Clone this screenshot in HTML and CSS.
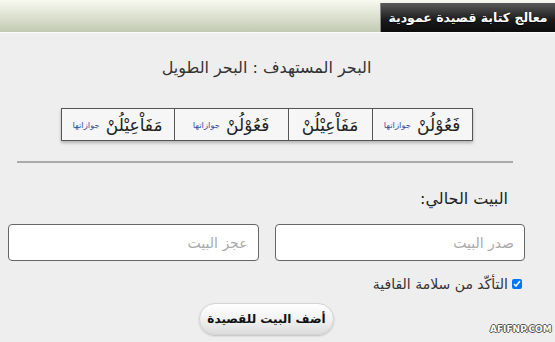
FILE: index.html
```html
<!DOCTYPE html>
<html dir="rtl" lang="ar">
<head>
<meta charset="utf-8">
<link rel="stylesheet" href="styles.css">
<title>معالج كتابة قصيدة عمودية</title>
</head>
<body>
	<div class="topbar">
		<div class="tab">معالج كتابة قصيدة عمودية</div>
	</div>
	<div class="content">
		<h2 class="target">البحر المستهدف : البحر الطويل</h2>
		<div class="meter">
			<div class="foot f1">فَعُوْلُنْ <a href="#">جوازاتها</a></div>
			<div class="foot f2">مَفَاْعِيْلُنْ</div>
			<div class="foot f3">فَعُوْلُنْ <a href="#">جوازاتها</a></div>
			<div class="foot f4">مَفَاْعِيْلُنْ <a href="#">جوازاتها</a></div>
		</div>
		<hr class="sep">
		<div class="current">البيت الحالي:</div>
		<div class="verse">
			<input type="text" class="half" placeholder="صدر البيت">
			<input type="text" class="half" placeholder="عجز البيت">
		</div>
		<label class="check"><input type="checkbox" checked> التأكّد من سلامة القافية</label>
		<div class="actions">
			<button class="add">أضف البيت للقصيدة</button>
		</div>
	</div>
	<div class="mark">AFIFNP.COM</div>
</body>
</html>
```
FILE: styles.css
```css
html, body {
	margin: 0;
	height: 100%;
}
body {
	background: #efeeee;
	font-family: "DejaVu Sans", sans-serif;
	color: #333;
	position: relative;
	overflow: hidden;
}
.topbar {
	height: 32px;
	background: linear-gradient(#f8f9f0, #c1cab2);
	border-bottom: 1px solid #fbfbf8;
	display: flex;
}
.tab {
	margin-top: 3px;
	width: 174px;
	height: 29px;
	background: linear-gradient(#5a5a5a, #1a1a1a 60%, #0c0c0c);
	border-left: 1px solid #888;
	color: #fff;
	font-weight: bold;
	font-size: 12.5px;
	line-height: 29px;
	text-align: center;
	text-shadow: 0 1px 1px #000;
}
.content {
	padding: 0 30px 0 8px;
}
.target {
	margin: 24px 0 0;
	font-size: 16px;
	font-weight: normal;
	line-height: 22px;
	text-align: center;
	color: #333;
}
.meter {
	margin: 29px auto 0;
	width: 410px;
	height: 31px;
	display: flex;
	border: 1px solid #555;
	background: #f6f6f6;
	box-shadow: 0 2px 3px rgba(0, 0, 0, 0.25);
}
.foot {
	display: flex;
	align-items: center;
	justify-content: center;
	gap: 6px;
	font-size: 17px;
	color: #222;
	border-left: 1px solid #555;
}
.foot:last-child {
	border-left: none;
}
.f1 { width: 99px; }
.f2 { width: 83px; }
.f3 { width: 113px; }
.f4 { flex: 1; }
.foot a {
	font-size: 8.5px;
	color: #3a4ea0;
	text-decoration: none;
}
.sep {
	margin: 20px 12px 0 9px;
	border: none;
	border-top: 2px solid #aaa;
	height: 0;
}
.current {
	margin: 26px 17px 0 0;
	font-size: 16px;
	line-height: 20px;
	color: #222;
}
.verse {
	margin-top: 15px;
	display: flex;
	gap: 16px;
}
.half {
	flex: 1;
	min-width: 0;
	height: 37px;
	box-sizing: border-box;
	border: 1px solid #666;
	border-radius: 4px;
	background: #fff;
	padding: 0 10px;
	font-family: "DejaVu Sans", sans-serif;
	font-size: 14px;
	direction: rtl;
}
.half::placeholder {
	color: #aaa;
}
.check {
	display: flex;
	align-items: center;
	gap: 4px;
	margin: 15px 3px 0 0;
	font-size: 14px;
	color: #333;
}
.check input {
	margin: 0;
	width: 10px;
	height: 10px;
}
.actions {
	display: flex;
	justify-content: center;
	margin-top: 11px;
}
.add {
	width: 135px;
	height: 32px;
	border-radius: 16px;
	border: 1px solid #d4d4d4;
	background: linear-gradient(#ffffff, #f2f2f2 50%, #dcdcdc);
	box-shadow: 0 1px 2px rgba(0, 0, 0, 0.2);
	font-family: "DejaVu Sans", sans-serif;
	font-weight: bold;
	font-size: 12px;
	color: #111;
}
.mark {
	position: absolute;
	left: 490px;
	top: 324px;
	font-family: "DejaVu Sans", sans-serif;
	font-size: 9px;
	font-weight: bold;
	color: #fff;
	direction: ltr;
	text-shadow: 1px 0 0 #555, -1px 0 0 #555, 0 1px 0 #555, 0 -1px 0 #555;
}
```
